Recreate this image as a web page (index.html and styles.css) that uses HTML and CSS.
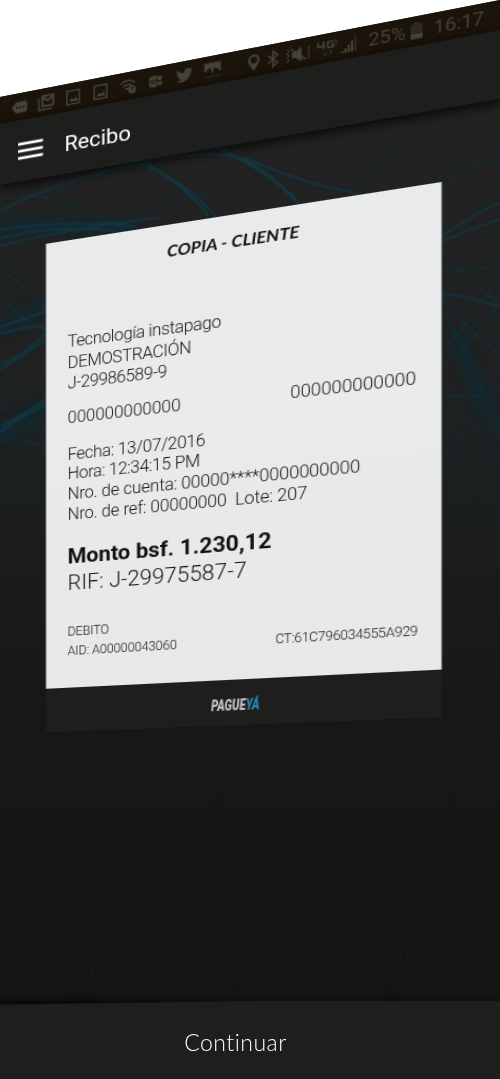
FILE: index.html
```html
<!DOCTYPE html>
<html lang="es">
<head>
<meta charset="utf-8">
<title>Recibo</title>
<link rel="stylesheet" href="styles.css">
</head>
<body>
<div class="phone">
  <svg class="backdrop" viewBox="0 0 500 1079" aria-hidden="true">
    <defs>
      <linearGradient id="night" x1="0" y1="0" x2="0" y2="1">
        <stop offset="0.1" stop-color="#222221"/>
        <stop offset="0.4" stop-color="#1e2121"/>
        <stop offset="0.65" stop-color="#161817"/>
        <stop offset="0.93" stop-color="#151613"/>
      </linearGradient>
      <filter id="soft"><feGaussianBlur stdDeviation="0.9"/></filter>
      <filter id="haze"><feGaussianBlur stdDeviation="5"/></filter>
    </defs>
    <path fill="url(#night)" d="M0 97 500 0V1079H0z"/>
    <g class="mist" filter="url(#haze)">
      <path d="M-5 226Q60 222 140 232M-5 330Q30 310 50 305M455 330Q480 410 510 440M-5 440Q20 420 50 410"/>
    </g>
    <g class="streaks" filter="url(#soft)">
      <path d="M0 211Q45 186 130 165T260 164T360 194"/>
      <path d="M140 164Q185 180 217 218M148 164Q190 190 208 216"/>
      <path d="M215 147Q265 164 300 204M222 151Q270 172 296 202"/>
      <path d="M0 230Q55 220 135 226M0 246Q70 228 160 218M0 238Q60 224 115 231"/>
      <path class="thin" d="M20 195Q70 196 125 232M130 215Q180 195 230 190"/>
      <path class="thin" d="M420 131Q385 160 358 192M480 131Q450 162 436 184M500 158Q470 165 442 188"/>
      <path d="M442 236Q470 217 500 202M442 241Q470 229 500 219"/>
      <path d="M442 294Q470 296 500 307"/>
      <path class="thin" d="M442 251Q475 290 500 302M442 269Q475 271 500 266M442 349Q465 330 500 277M442 365Q480 340 500 299M442 296Q465 330 500 353"/>
      <path class="thin" d="M442 310Q475 370 500 390M442 395Q475 401 500 389"/>
      <path class="thin" d="M0 269Q30 288 46 310M0 297Q22 319 46 331"/>
      <path d="M0 327Q22 320 46 311M0 334Q25 326 46 326"/>
      <path d="M0 365Q28 352 46 333M0 370Q25 355 46 339"/>
      <path d="M0 427Q25 414 46 399M0 433Q28 412 46 405"/>
      <path class="thin" d="M0 405Q20 420 46 430M0 440Q25 438 46 448"/>
      <path class="ghost" d="M442 403Q465 430 462 530M470 380Q486 420 480 520M442 455Q475 425 500 410M442 470Q470 440 500 450"/>
    </g>
    <g class="reeds" filter="url(#soft)">
      <path d="M45 850Q50 925 72 1000Q58 925 45 850M60 870Q75 930 90 1000Q66 930 60 870M88 1000Q94 910 128 850Q104 910 88 1000M115 860Q118 920 132 975Q110 920 115 860M215 790Q205 880 220 980Q212 880 215 790M270 850Q250 910 236 990Q242 910 270 850M290 830Q280 920 280 990Q270 920 290 830M320 820Q280 910 283 990Q276 910 320 820M355 840Q370 920 385 990Q360 920 355 840M370 810Q395 900 390 1000Q382 900 370 810M420 820Q408 910 408 990Q400 910 420 820M452 800Q456 900 438 990Q448 900 452 800M5 1000Q0 920 25 850Q8 920 5 1000"/>
    </g>
  </svg>

  <div class="scene">
    <div class="status">
      <svg class="status-left" viewBox="0 0 334 27" aria-hidden="true">
        <path d="M16 8.500h9q2 0 2 2v7q0 2-2 2h-9l-4.500-5.500z"/>
        <g class="hole"><circle cx="17" cy="14" r="1"/><circle cx="20.300" cy="14" r="1"/><circle cx="23.600" cy="14" r="1"/></g>
        <path class="line" d="M38.500 9.500v11.200h12.500"/><path class="line bold" d="M42 17.500v-10h10.500v10zM42 8l5.300 4.500L52.500 8"/>
        <path class="line" d="M65.800 7.500h12v13h-12z"/><path d="M68 18l2.500-3.500 2 2 2-2.500 2.300 4z"/>
        <path class="line" d="M92 7.500h12v13H92z"/><path d="M94.200 18l2.500-3.500 2 2 2-2.500 2.300 4z"/>
        <path class="line" d="M117 11q7-6 14 0M119.300 14q4.700-4 9 0M121.700 16.600q2.300-2 4.500 0"/>
        <circle cx="128" cy="17.500" r="3.700"/><path class="cut" d="M126.800 16.300q1.200-1.500 2.200-.4t-1 1.700v.6"/>
        <path d="M144 9.500l6.500-1.500v12L144 18.500zM151.300 9.500h4.500v3l-2 1.500-2.500-1.700zM151.300 14l2.500 1.600 2-1.400v4h-4.500z"/><ellipse class="cut" cx="147.200" cy="14" rx="1.500" ry="2"/>
        <path d="M169 18.200c2 .1 3.500-.3 4.700-1.200-1.500-.1-2.500-.9-3-2.200h1.300c-1.600-.5-2.500-1.700-2.500-3.300l1.400.4c-1.400-1.100-1.900-2.600-1-4.200 1.800 2.100 3.900 3.300 6.500 3.400-.5-2.300 1-4 3-4 1 0 1.800.4 2.300 1l2-.8-1.300 1.800 1.700-.4-1.600 1.600c.3 6.200-6.700 12.500-13.500 7.900z"/>
        <path d="M194.500 6.500h15v9l-5.500-4.500-2 4.500-2.300-4.500-5.200 4z"/><path d="M200.500 12h3l-1.500 5z"/><path class="dim" d="M195 19h14v1h-14z"/>
        <path fill-rule="evenodd" d="M239 6.500a5.100 5.100 0 0 1 5.200 5.200c0 3.600-5.200 9.500-5.200 9.500s-5.200-5.900-5.200-9.500A5.100 5.100 0 0 1 239 6.500zm0 2.100a3 3 0 1 0 0 6.100 3 3 0 0 0 0-6.100z"/>
        <path class="line" d="M251.500 10.300l8.300 7.200-3.900 3.500V7l3.900 3.500-8.300 7.200"/>
        <path d="M272.500 11.500h3.300l5-4.300v14l-5-4.300h-3.300z"/><path class="line" d="M271.500 8l13 12"/><path class="wave" d="M268.300 8l1.500 2-1.500 2 1.500 2-1.500 2 1.500 2-1.500 2M286.300 8l1.500 2-1.500 2 1.500 2-1.500 2 1.500 2-1.500 2"/>
        <path class="line" d="M295 7v4.200h6.500M299.800 7v7M308.200 7.800h-4.700v5.500h4.700v-2.700h-2.300"/>
        <path class="faint" d="M311.500 7h-2.200v1.500h2v1.500h-2M309.300 12h2.200M301 16v4m-1.500-1.500L301 20l1.500-1.500M306 20v-4m-1.500 1.500L306 16l1.500 1.500"/>
        <path d="M314.700 19h1.900v2h-1.900zM317.500 17h1.900v4h-1.900zM320.300 14h1.900v7h-1.900zM323.100 11h1.900v10h-1.900z"/><path class="dim" d="M326 7h2v14h-2z"/>
      </svg>
      <span class="percent">25%</span>
      <svg class="battery" viewBox="0 0 10 16" aria-hidden="true"><path class="dim" d="M3 0h4v2h3v9H0V2h3z"/><path d="M0 11h10v4.500H0z"/></svg>
      <span class="clock">16:17</span>
    </div>
    <header class="appbar">
      <svg class="menu" viewBox="0 0 25 18" aria-hidden="true"><path d="M0 .4h24.500v2.800H0zM0 7.400h24.500v2.800H0zM0 14.400h24.500v2.800H0z"/></svg>
      <h1>Recibo</h1>
    </header>
    <article class="receipt">
      <div class="paper">
        <h2>COPIA - CLIENTE</h2>
        <div class="merchant">Tecnología instapago<br>DEMOSTRACIÓN<br>J-29986589-9</div>
        <div class="row codes"><span>000000000000</span><span>000000000000</span></div>
        <div class="details"><span class="tight">Fecha: 13/07/2016<br>Hora: 12:34:15 PM</span><br>Nro. de cuenta: 00000****0000000000<br>Nro. de ref: 00000000&nbsp; Lote: 207</div>
        <div class="amount"><b>Monto bsf. 1.230,12</b><br>RIF: J-29975587-7</div>
        <div class="row small"><span>DEBITO<br>AID: A00000043060</span><span class="ct">CT:61C796034555A929</span></div>
      </div>
      <div class="brand"><span class="logo">PAGUE<em>YÁ</em></span></div>
    </article>
  </div>

  <footer class="action"><span>Continuar</span></footer>
</div>
</body>
</html>
```
FILE: styles.css
```css
body { margin: 0; background: #fff; font-family: Roboto, sans-serif; }
.phone { position: relative; width: 500px; height: 1079px; overflow: hidden; }
.backdrop { position: absolute; inset: 0; width: 500px; height: 1079px; }
.mist { fill: none; stroke: #102b34; stroke-width: 14; opacity: .6; }
.streaks { fill: none; stroke: #0d4257; stroke-width: 2.2; opacity: .66; }
.streaks .thin { stroke-width: 1.5; opacity: .7; }
.streaks .ghost { stroke-width: 1.5; opacity: .3; }
.reeds { fill: #16181b; stroke: #16181b; stroke-width: 1; opacity: .45; }

/* The left edge keeps its scale; everything grows towards the right. */
.scene {
  position: relative;
  box-sizing: border-box;
  width: 446px;
  height: 1001px;
  padding-top: 97px;
  transform-origin: 0 0;
  transform: matrix3d(1, -0.2178, 0, -0.000245, 0, 1, 0, 0, 0, 0, 1, 0, 0, 0, 0, 1);
}
.status { display: flex; align-items: center; height: 26.500px; background: #1b140b; color: #45413b; fill: #45413b; }
.status-left { width: 334px; height: 27px; flex: none; }
.status-left .line { fill: none; stroke: #45413b; stroke-width: 1.500; }
.status-left .bold { stroke-width: 2; }
.status-left .wave { fill: none; stroke: #45413b; stroke-width: 1; }
.status-left .faint { fill: none; stroke: #332e27; stroke-width: 1; }
.status-left .hole { fill: #1b140b; }
.status-left .cut { fill: none; stroke: #1b140b; stroke-width: 1; }
.dim { fill: #2d2820; }
.percent { width: 35px; padding-left: 4px; font-size: 16.600px; }
.battery { width: 10px; height: 16px; flex: none; }
.clock { padding-left: 9px; font-size: 16.400px; }

.appbar { display: flex; align-items: center; height: 61.800px; padding-left: 18px; background: #1e1e1c; box-shadow: 0 3px 10px 1px rgba(0, 0, 0, .8); color: #fff; }
.menu { width: 25px; height: 18px; margin-top: 1px; fill: #fff; }
.appbar h1 { margin: 4px 0 0 20.500px; font-size: 20.800px; font-weight: 400; }

.receipt { width: 353px; margin: 66.200px 0 0 45px; transform: translateX(.5px); }
.paper { box-sizing: border-box; height: 439.300px; padding: 15px 21px 0 21px; background: linear-gradient(#e9eaea, #e9ebec 35%, #e7e8e7); color: #111; font-size: 16px; font-weight: 300; }
.paper h2 { margin: 0 4.500px 0 0; text-align: center; font: italic 700 16px/20px Lato, sans-serif; letter-spacing: .05px; }
.merchant { margin-top: 54.700px; line-height: 20.400px; letter-spacing: -.35px; }
.row { display: flex; justify-content: space-between; align-items: flex-end; }
.codes { margin-top: 13.900px; line-height: 20px; }
.details { margin-top: 15.300px; line-height: 19.900px; letter-spacing: -.15px; }
.tight { letter-spacing: -.28px; }
.amount { margin-top: 19.200px; font-size: 20.700px; line-height: 25.200px; }
.amount b { font-weight: 700; }
.small { margin: 26.400px -1.500px 0 0; font-size: 12px; line-height: 19.300px; letter-spacing: -.1px; }
.ct { letter-spacing: -.25px; }
.brand { display: flex; justify-content: center; align-items: center; height: 43.500px; background: #1e1e1c; }
.logo { margin-top: 5px; color: #c4c4c2; font: italic 900 15px/20px Roboto, sans-serif; transform: scaleX(.68); }
.logo em { color: #2b83bd; }

.action { position: relative; display: flex; justify-content: center; align-items: center; height: 78px; padding: 4px 29px 0 0; box-sizing: border-box; background: linear-gradient(179.100deg, #0a0a09 3px, #1e1e1c 4.500px); box-shadow: 0 -2px 9px rgba(0, 0, 0, .45); color: #fff; font: 300 23px Lato, sans-serif; font-variant-ligatures: none; letter-spacing: .5px; }
```
